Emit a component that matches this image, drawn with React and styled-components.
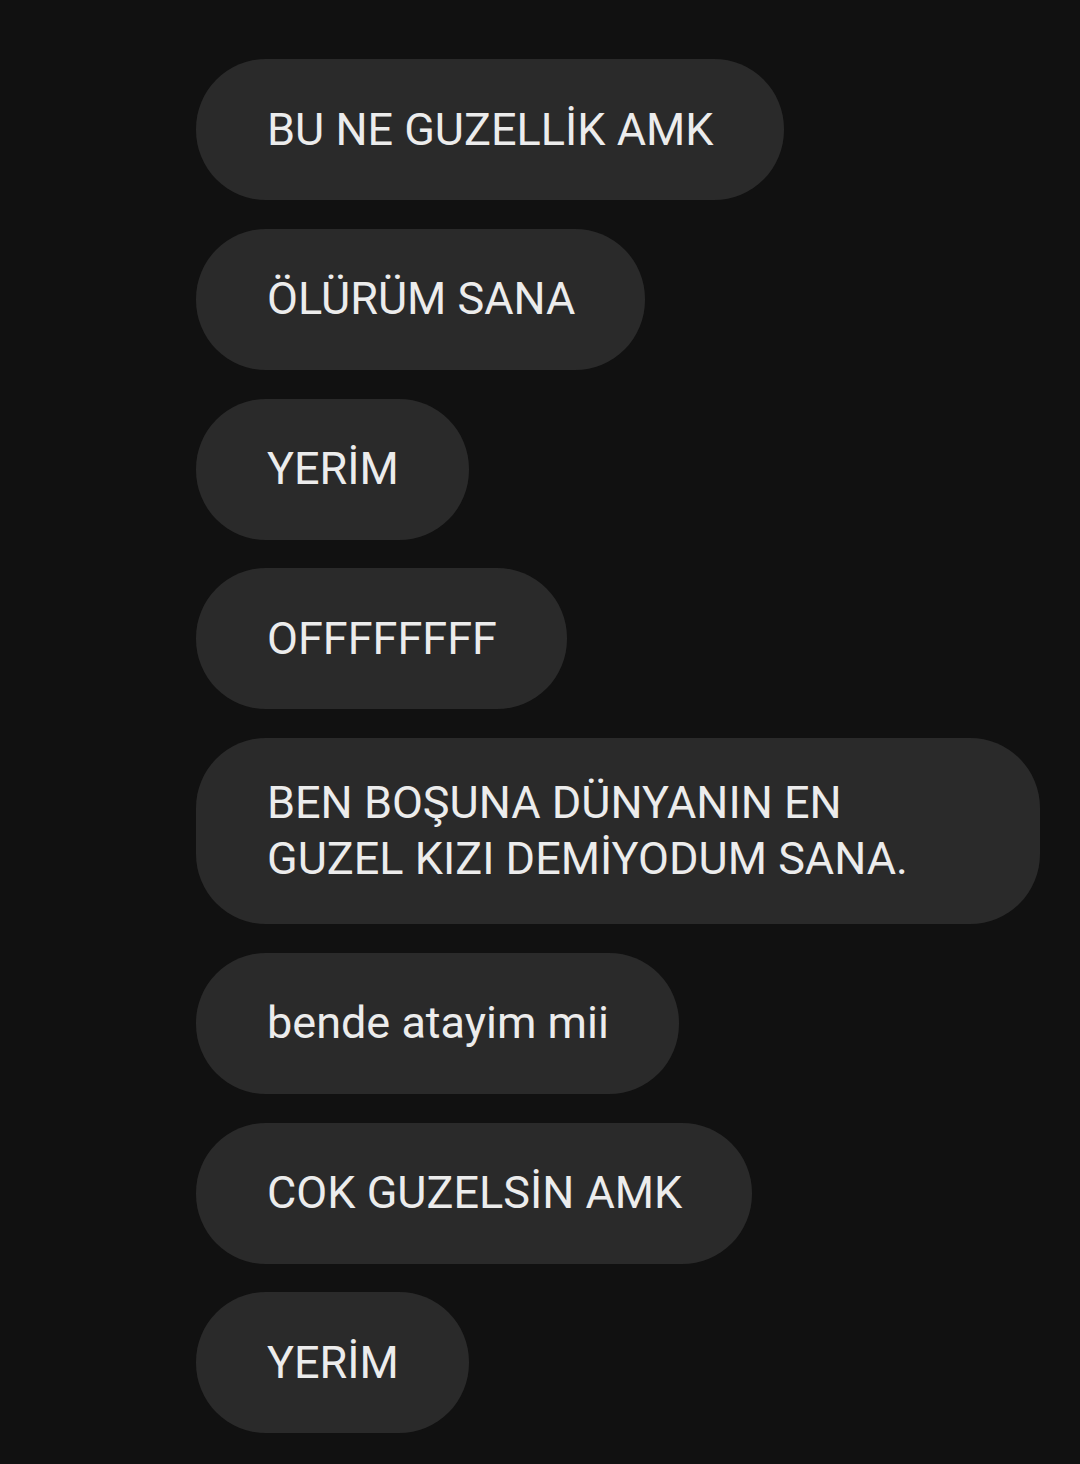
import React from "react";
import styled, { createGlobalStyle } from "styled-components";

const Global = createGlobalStyle`
  html, body {
    margin: 0;
    padding: 0;
    background: #111111;
  }
  body {
    font-family: Roboto, "Noto Sans", "Liberation Sans", sans-serif;
  }
`;

const Screen = styled.div`
  width: 1080px;
  min-height: 1464px;
  box-sizing: border-box;
  background: #111111;
  padding: 59px 0 0 196px;
  display: flex;
  flex-direction: column;
  align-items: flex-start;
  gap: 28.75px;
`;

const Bubble = styled.div`
  box-sizing: border-box;
  width: ${(p) => (p.$wide ? "844px" : "auto")};
  max-width: 844px;
  min-height: 141px;
  padding: 37px 70px 37px 71px;
  border-radius: 70px;
  background: #2a2a2a;
  color: #ececec;
  font-size: 45px;
  line-height: 56px;
  display: flex;
  align-items: center;
`;

const messages = [
  "BU NE GUZELLİK AMK",
  "ÖLÜRÜM SANA",
  "YERİM",
  "OFFFFFFFF",
  ["BEN BOŞUNA DÜNYANIN EN", "GUZEL KIZI DEMİYODUM SANA."],
  "bende atayim mii",
  "COK GUZELSİN AMK",
  "YERİM",
];

export default function App() {
  return (
    <>
      <Global />
      <Screen>
        {messages.map((m, i) =>
          Array.isArray(m) ? (
            <Bubble key={i} $wide>
              <span>
                {m[0]}
                <br />
                {m[1]}
              </span>
            </Bubble>
          ) : (
            <Bubble key={i}>{m}</Bubble>
          )
        )}
      </Screen>
    </>
  );
}
